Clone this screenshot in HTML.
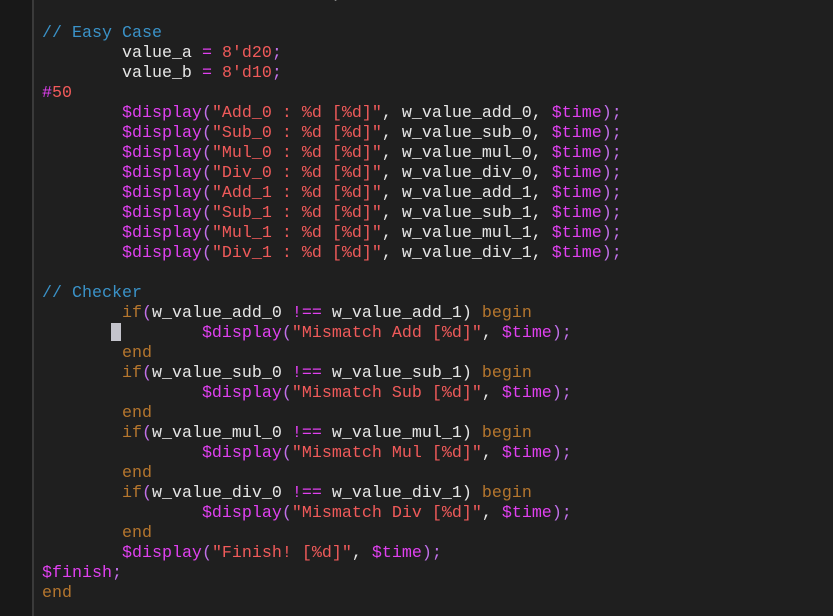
<!DOCTYPE html>
<html><head><meta charset="utf-8"><style>
html,body{margin:0;padding:0;width:833px;height:616px;overflow:hidden;background:#1f1f1f}
.gut{position:absolute;left:0;top:0;width:32px;height:616px;background:#181818}
.bar{position:absolute;left:32px;top:0;width:2px;height:616px;background:#3a3a3a}
.code{position:absolute;left:42px;top:-16px;font-family:"Liberation Mono",monospace;font-size:16.67px;line-height:20px;white-space:pre;color:#e6e6e6}
.c{color:#3a92c8}.m{color:#e040f0}.s{color:#f05a5a}.k{color:#b5762e}.p{color:#c070e8}
.cur{position:absolute;left:111px;top:323px;width:10px;height:18px;background:#c4c4cc}
</style></head><body>
<div class="gut"></div><div class="bar"></div><div class="cur"></div>
<div class="code">                 _           )
 
<span class="c">// Easy Case</span>
        value_a <span class="m">=</span> <span class="s">8'd20</span><span class="p">;</span>
        value_b <span class="m">=</span> <span class="s">8'd10</span><span class="p">;</span>
<span class="m">#</span><span class="s">50</span>
        <span class="m">$display</span><span class="p">(</span><span class="s">"Add_0 : %d [%d]"</span>, w_value_add_0, <span class="m">$time</span><span class="p">);</span>
        <span class="m">$display</span><span class="p">(</span><span class="s">"Sub_0 : %d [%d]"</span>, w_value_sub_0, <span class="m">$time</span><span class="p">);</span>
        <span class="m">$display</span><span class="p">(</span><span class="s">"Mul_0 : %d [%d]"</span>, w_value_mul_0, <span class="m">$time</span><span class="p">);</span>
        <span class="m">$display</span><span class="p">(</span><span class="s">"Div_0 : %d [%d]"</span>, w_value_div_0, <span class="m">$time</span><span class="p">);</span>
        <span class="m">$display</span><span class="p">(</span><span class="s">"Add_1 : %d [%d]"</span>, w_value_add_1, <span class="m">$time</span><span class="p">);</span>
        <span class="m">$display</span><span class="p">(</span><span class="s">"Sub_1 : %d [%d]"</span>, w_value_sub_1, <span class="m">$time</span><span class="p">);</span>
        <span class="m">$display</span><span class="p">(</span><span class="s">"Mul_1 : %d [%d]"</span>, w_value_mul_1, <span class="m">$time</span><span class="p">);</span>
        <span class="m">$display</span><span class="p">(</span><span class="s">"Div_1 : %d [%d]"</span>, w_value_div_1, <span class="m">$time</span><span class="p">);</span>
 
<span class="c">// Checker</span>
        <span class="k">if</span><span class="p">(</span>w_value_add_0 <span class="m">!==</span> w_value_add_1) <span class="k">begin</span>
                <span class="m">$display</span><span class="p">(</span><span class="s">"Mismatch Add [%d]"</span>, <span class="m">$time</span><span class="p">);</span>
        <span class="k">end</span>
        <span class="k">if</span><span class="p">(</span>w_value_sub_0 <span class="m">!==</span> w_value_sub_1) <span class="k">begin</span>
                <span class="m">$display</span><span class="p">(</span><span class="s">"Mismatch Sub [%d]"</span>, <span class="m">$time</span><span class="p">);</span>
        <span class="k">end</span>
        <span class="k">if</span><span class="p">(</span>w_value_mul_0 <span class="m">!==</span> w_value_mul_1) <span class="k">begin</span>
                <span class="m">$display</span><span class="p">(</span><span class="s">"Mismatch Mul [%d]"</span>, <span class="m">$time</span><span class="p">);</span>
        <span class="k">end</span>
        <span class="k">if</span><span class="p">(</span>w_value_div_0 <span class="m">!==</span> w_value_div_1) <span class="k">begin</span>
                <span class="m">$display</span><span class="p">(</span><span class="s">"Mismatch Div [%d]"</span>, <span class="m">$time</span><span class="p">);</span>
        <span class="k">end</span>
        <span class="m">$display</span><span class="p">(</span><span class="s">"Finish! [%d]"</span>, <span class="m">$time</span><span class="p">);</span>
<span class="m">$finish</span><span class="p">;</span>
<span class="k">end</span></div>
</body></html>
